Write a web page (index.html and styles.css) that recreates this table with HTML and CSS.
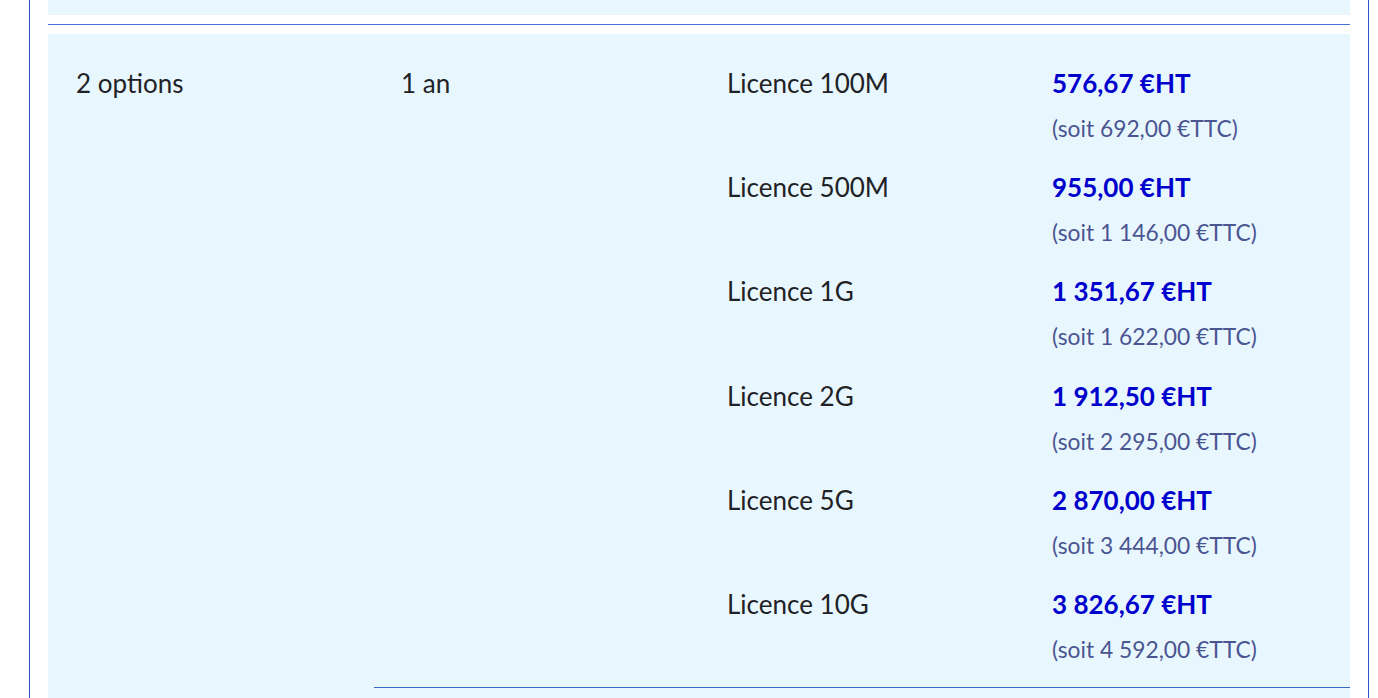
FILE: index.html
```html
<!DOCTYPE html>
<html lang="fr">
<head>
<meta charset="utf-8">
<title>Tarifs</title>
<link rel="stylesheet" href="styles.css">
</head>
<body>
<div class="card">
  <div class="prev-row"></div>
  <div class="separator"></div>
  <div class="row">
    <div class="cell first">2 options</div>
    <div class="right">
      <div class="cell duration">1 an</div>
      <div class="offers">
        <div class="offer"><div class="cell name">Licence 100M</div><div class="cell price"><div class="ht">576,67 €HT</div><div class="ttc">(soit 692,00 €TTC)</div></div></div>
        <div class="offer"><div class="cell name">Licence 500M</div><div class="cell price"><div class="ht">955,00 €HT</div><div class="ttc">(soit 1 146,00 €TTC)</div></div></div>
        <div class="offer"><div class="cell name">Licence 1G</div><div class="cell price"><div class="ht">1 351,67 €HT</div><div class="ttc">(soit 1 622,00 €TTC)</div></div></div>
        <div class="offer"><div class="cell name">Licence 2G</div><div class="cell price"><div class="ht">1 912,50 €HT</div><div class="ttc">(soit 2 295,00 €TTC)</div></div></div>
        <div class="offer"><div class="cell name">Licence 5G</div><div class="cell price"><div class="ht">2 870,00 €HT</div><div class="ttc">(soit 3 444,00 €TTC)</div></div></div>
        <div class="offer"><div class="cell name">Licence 10G</div><div class="cell price"><div class="ht">3 826,67 €HT</div><div class="ttc">(soit 4 592,00 €TTC)</div></div></div>
      </div>
    </div>
  </div>
</div>
</body>
</html>
```
FILE: styles.css
```css
* { box-sizing: border-box; }
html, body { margin: 0; padding: 0; background: #ffffff; }
body {
  font-family: "Lato", "Liberation Sans", sans-serif;
  color: #1f2226;
  overflow: hidden;
  height: 698px;
}
.card {
  margin-left: 29px;
  width: 1340px;
  border-left: 1px solid #2d52c9;
  border-right: 1px solid #2d52c9;
  padding: 0 18px;
  height: 698px;
  display: flex;
  flex-direction: column;
  overflow: hidden;
}
.prev-row {
  height: 15px;
  background: #e8f7fe;
}
.separator {
  margin-top: 9px;
  height: 1px;
  background: #4a70dc;
}
.row {
  margin-top: 9px;
  background: #e8f7fe;
  display: grid;
  grid-template-columns: 326px 1fr;
  padding-top: 27px;
  flex: 1;
  align-items: start;
}
.cell {
  padding-left: 28px;
  font-size: 26px;
  line-height: 45px;
}
.right {
  display: grid;
  grid-template-columns: 326px 1fr;
  border-bottom: 1px solid #3d68c6;
  padding-bottom: 1px;
}
.duration { padding-left: 27px; }
.offers { display: flex; flex-direction: column; }
.offer {
  display: grid;
  grid-template-columns: 325px 1fr;
  padding-bottom: 14.2px;
}
.name { padding-left: 27px; }
.price { padding-left: 27px; }
.ht {
  font-weight: 700;
  color: #0000cc;
}
.ttc {
  font-size: 22.8px;
  color: #4b5592;
}
```
